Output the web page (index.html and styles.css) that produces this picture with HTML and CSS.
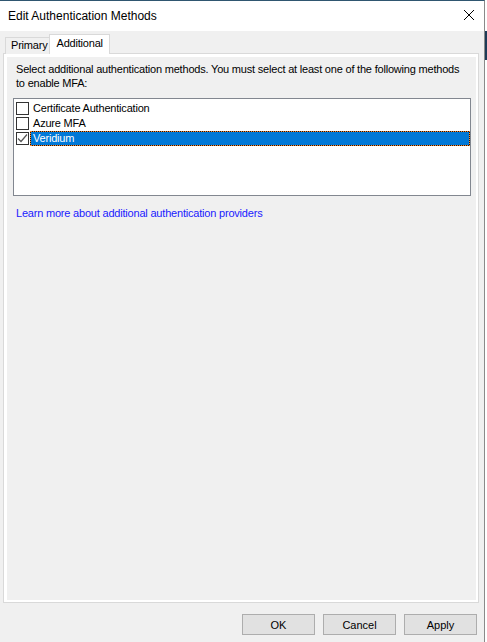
FILE: index.html
```html
<!DOCTYPE html>
<html lang="en">
<head>
    <meta charset="UTF-8">
    <meta name="viewport" content="width=device-width, initial-scale=1.0">
    <title>Edit Authentication Methods</title>
    <link rel="stylesheet" href="styles.css">
</head>
<body>
    <div class="window">
        <div class="titlebar">
            <span class="title">Edit Authentication Methods</span>
            <svg class="close" width="12" height="12" viewBox="0 0 12 12">
                <path d="M1 1 L11 11 M11 1 L1 11" stroke="#000" stroke-width="1" fill="none"/>
            </svg>
        </div>
        <div class="dialog">
            <div class="tabs">
                <div class="tab">Primary</div>
                <div class="tab active">Additional</div>
            </div>
            <div class="panel">
                <div class="page">
                    <p class="hint">Select additional authentication methods. You must select at least one of the following methods to enable MFA:</p>
                    <div class="listbox">
                        <div class="item">
                            <span class="check"></span>
                            <span class="label">Certificate Authentication</span>
                        </div>
                        <div class="item">
                            <span class="check"></span>
                            <span class="label">Azure MFA</span>
                        </div>
                        <div class="item">
                            <span class="check">
                                <svg width="11" height="11" viewBox="0 0 11 11">
                                    <path d="M1 5.5 L4 8.5 L10 1.5" stroke="#555" stroke-width="1.2" fill="none"/>
                                </svg>
                            </span>
                            <span class="label selected">Veridium</span>
                        </div>
                    </div>
                    <a class="link" href="#">Learn more about additional authentication providers</a>
                </div>
            </div>
            <div class="buttons">
                <button>OK</button>
                <button>Cancel</button>
                <button>Apply</button>
            </div>
        </div>
    </div>
    <div class="backdrop">
        <div class="band"></div>
    </div>
</body>
</html>
```

FILE: styles.css
```css
* {
    box-sizing: border-box;
}
body {
    margin: 0;
    display: flex;
    height: 642px;
    overflow: hidden;
    font-family: "Liberation Sans", Arial, sans-serif;
    font-size: 11px;
    letter-spacing: -0.2px;
    color: #000;
    background: #fff;
}
.window {
    width: 485px;
    border-top: 1px solid #2f5670;
    border-right: 1px solid #8a8a8a;
    display: flex;
    flex-direction: column;
    background: #f0f0f0;
}
.titlebar {
    height: 30px;
    flex: none;
    background: #fff;
    display: flex;
    align-items: center;
    justify-content: space-between;
    padding: 0 9px 0 8px;
}
.title {
    font-size: 12px;
    letter-spacing: 0;
    margin-top: -1px;
}
.close {
    margin-top: -2px;
}
.dialog {
    flex: 1;
    display: flex;
    flex-direction: column;
    padding: 3px 5px 0 3px;
}
.tabs {
    display: flex;
    align-items: flex-end;
    height: 20px;
    padding-left: 2px;
    margin-bottom: -1px;
    position: relative;
    z-index: 1;
}
.tab {
    height: 17px;
    padding: 0 1px 0 5px;
    border: 1px solid #d9d9d9;
    border-bottom: none;
    background: #f0f0f0;
    line-height: 15px;
}
.tab.active {
    height: 20px;
    background: #fff;
    padding: 0 6px 0 7px;
    line-height: 16px;
    margin-left: -1px;
}
.panel {
    height: 550px;
    flex: none;
    border: 1px solid #d9d9d9;
    background: #fff;
    padding: 3px 2px 2px 3px;
}
.page {
    height: 100%;
    background: #f0f0f0;
    padding: 0 0 0 6px;
    display: flex;
    flex-direction: column;
    align-items: flex-start;
}
.hint {
    margin: 5px 0 0 3px;
    line-height: 14px;
    width: 450px;
}
.listbox {
    margin-top: 8px;
    width: 458px;
    height: 98px;
    border: 1px solid #828790;
    background: #fff;
    padding: 2px 0 0 2px;
}
.item {
    display: flex;
    align-items: center;
    height: 15px;
}
.check {
    width: 13px;
    height: 13px;
    border: 1px solid #333;
    background: #fff;
    display: flex;
    align-items: center;
    justify-content: center;
    margin-right: 1px;
}
.label {
    height: 15px;
    line-height: 13px;
    padding: 0 2px;
    border: 1px solid transparent;
}
.label.selected {
    flex: 1;
    color: #fff;
    border: 1px dotted #ff8728;
    background: linear-gradient(#0078d7, #0078d7) padding-box, #1a1a1a;
}
.link {
    display: block;
    margin: 10px 0 0 3px;
    line-height: 14px;
    color: #1a1aff;
    text-decoration: none;
}
.buttons {
    display: flex;
    justify-content: flex-end;
    gap: 8px;
    padding: 11px 2px 0 0;
}
button {
    width: 73px;
    height: 21px;
    background: #e1e1e1;
    border: 1px solid #adadad;
    font-family: "Liberation Sans", Arial, sans-serif;
    font-size: 11px;
    color: #000;
    padding: 0;
}
.backdrop {
    flex: 1;
    background: #fff;
}
.band {
    margin-top: 31px;
    height: 29px;
    background: #1d3b57;
}
```
